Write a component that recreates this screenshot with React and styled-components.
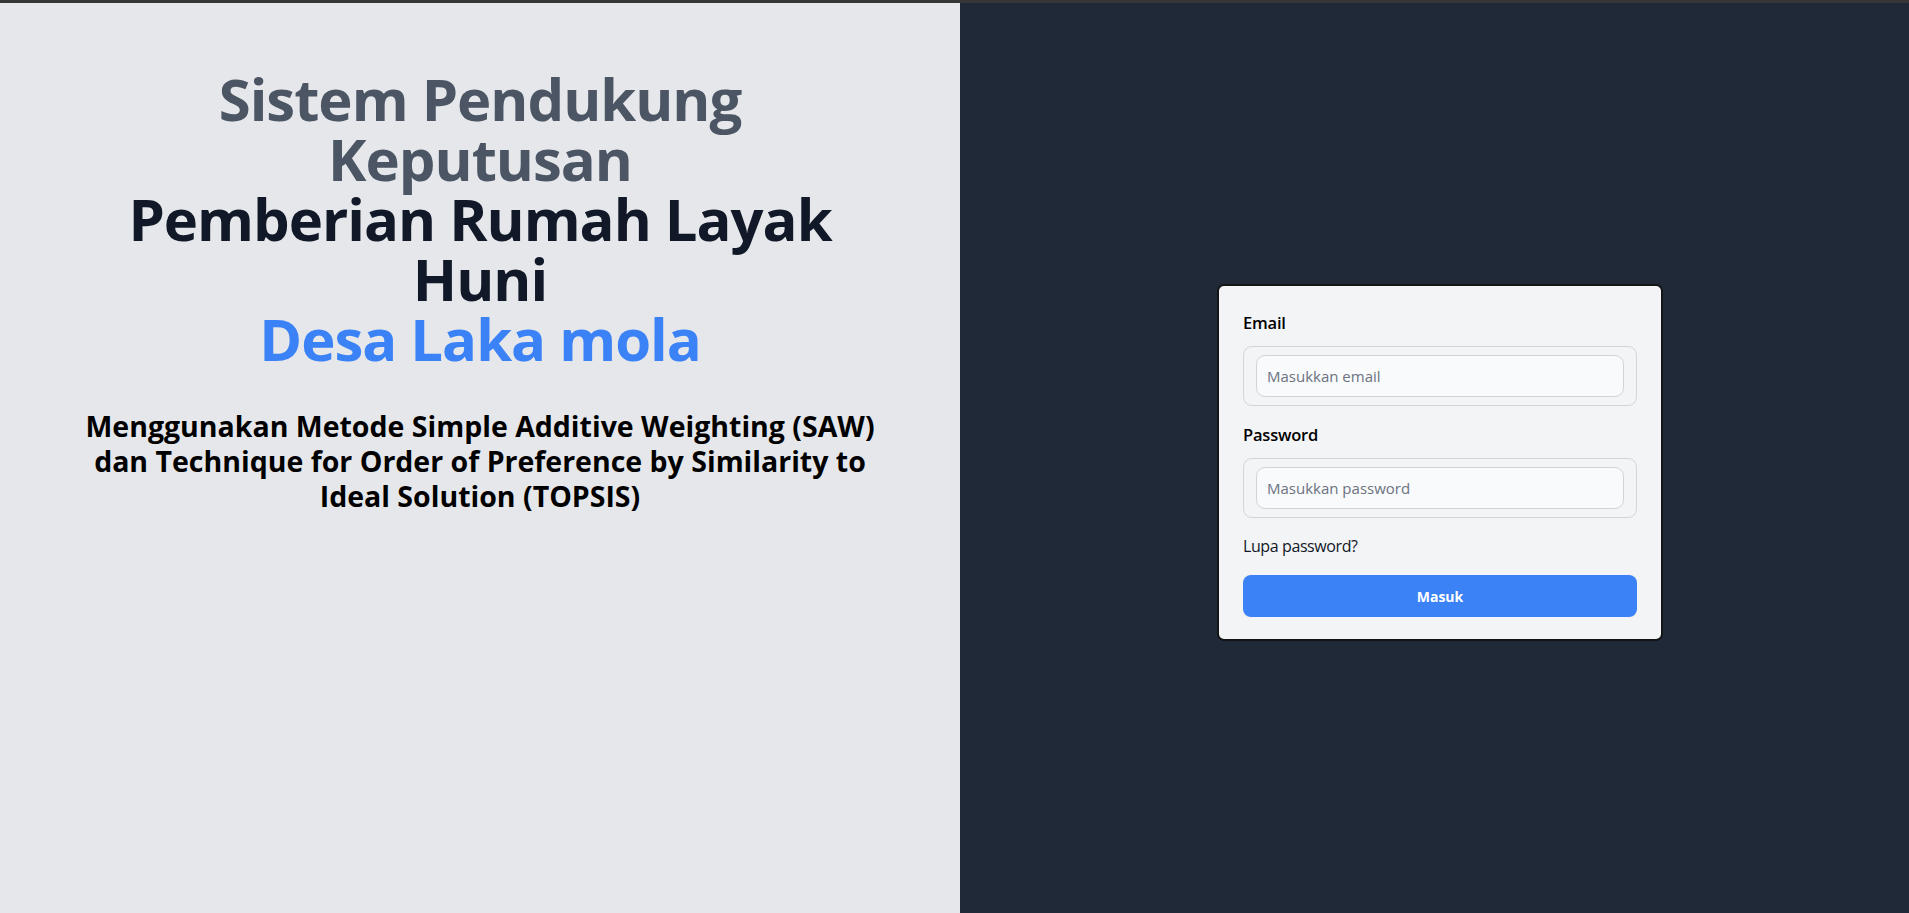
import React from "react";
import styled, { createGlobalStyle } from "styled-components";

const GlobalStyle = createGlobalStyle`
  html, body {
    margin: 0;
    padding: 0;
    overflow: hidden;
    background: #1f2937;
  }
  body {
    font-family: "Open Sans", "Noto Sans", sans-serif;
  }
  * { box-sizing: border-box; }
`;

const Page = styled.div`
  display: flex;
  flex-direction: column;
  width: 1920px;
`;

const TopStrip = styled.div`
  height: 3px;
  background: #363636;
`;

const Split = styled.div`
  display: flex;
  min-height: 100vh;
`;

const LeftPanel = styled.section`
  flex: 0 0 960px;
  background: #e5e7eb;
  padding: 66px 64px 0;
  text-align: center;
`;

const RightPanel = styled.section`
  flex: 0 0 960px;
  background: #1f2937;
  display: flex;
  align-items: center;
  justify-content: center;
  padding-top: 6px;
`;

const Title = styled.h1`
  margin: 0;
  font-size: 58px;
  line-height: 60px;
  letter-spacing: -1px;
  font-weight: 700;
`;

const TitleLine = styled.span`
  display: block;
  color: ${(p) => p.$tone};
`;

const Subtitle = styled.h2`
  margin: 40px 0 0;
  font-size: 28.5px;
  line-height: 35px;
  font-weight: 700;
  color: #000;
`;

const Card = styled.form`
  width: 446px;
  background: #f3f4f6;
  border: 2px solid #141414;
  border-radius: 7px;
  padding: 24px 24px 22px;
  display: flex;
  flex-direction: column;
`;

const Label = styled.label`
  font-size: 16.5px;
  line-height: 26px;
  letter-spacing: -0.2px;
  font-weight: 600;
  color: #000;
  margin-bottom: 10px;
`;

const FieldBox = styled.div`
  border: 1px solid #d1d5db;
  border-radius: 9px;
  padding: 8px 12px;
  margin-bottom: 16px;
`;

const Input = styled.input`
  display: block;
  width: 100%;
  height: 42px;
  border: 1px solid #d1d5db;
  border-radius: 9px;
  background: #f9fafb;
  padding: 0 10px;
  font-family: inherit;
  font-size: 15px;
  color: #111827;
  outline: none;
  &::placeholder {
    color: #6b7280;
  }
`;

const Forgot = styled.a`
  font-size: 16px;
  line-height: 25px;
  letter-spacing: -0.4px;
  color: #111827;
  text-decoration: none;
  margin-bottom: 16px;
`;

const SubmitButton = styled.button`
  height: 42px;
  border: none;
  border-radius: 8px;
  background: #3b82f6;
  color: #fff;
  font-family: inherit;
  font-size: 14px;
  font-weight: 700;
`;

export default function App() {
  return (
    <>
      <GlobalStyle />
      <Page>
        <TopStrip />
        <Split>
          <LeftPanel>
            <Title>
              <TitleLine $tone="#4b5563">
                Sistem Pendukung
                <br />
                Keputusan
              </TitleLine>
              <TitleLine $tone="#111827">
                Pemberian Rumah Layak
                <br />
                Huni
              </TitleLine>
              <TitleLine $tone="#3b82f6">Desa Laka mola</TitleLine>
            </Title>
            <Subtitle>
              Menggunakan Metode Simple Additive Weighting (SAW)
              <br />
              dan Technique for Order of Preference by Similarity to
              <br />
              Ideal Solution (TOPSIS)
            </Subtitle>
          </LeftPanel>
          <RightPanel>
            <Card onSubmit={(e) => e.preventDefault()}>
              <Label htmlFor="email">Email</Label>
              <FieldBox>
                <Input id="email" type="email" placeholder="Masukkan email" />
              </FieldBox>
              <Label htmlFor="password">Password</Label>
              <FieldBox>
                <Input id="password" type="password" placeholder="Masukkan password" />
              </FieldBox>
              <Forgot href="#">Lupa password?</Forgot>
              <SubmitButton type="submit">Masuk</SubmitButton>
            </Card>
          </RightPanel>
        </Split>
      </Page>
    </>
  );
}
